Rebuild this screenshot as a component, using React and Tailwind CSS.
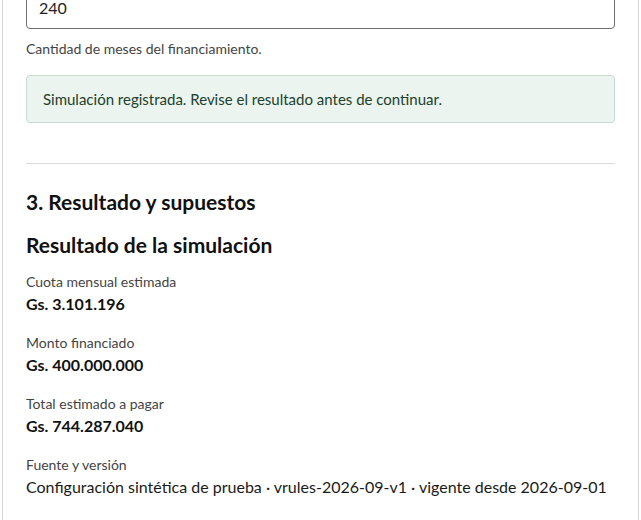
export default function App() {
  const results = [
    { label: 'Cuota mensual estimada', value: 'Gs. 3.101.196' },
    { label: 'Monto financiado', value: 'Gs. 400.000.000' },
    { label: 'Total estimado a pagar', value: 'Gs. 744.287.040' },
  ];

  return (
    <div className="h-[520px] overflow-hidden bg-white font-['Lato',sans-serif] text-[#1a1a1a]">
      <div className="mx-[2px] -mt-[42px] border-x border-t border-[#d6d6d6] px-[23px] pt-[26px] pb-8">
        <input
          type="text"
          readOnly
          value="240"
          className="block h-[44px] w-full rounded-[4px] border border-[#6f6f6f] px-3 text-[16px] leading-[22px] text-[#222] outline-none"
        />
        <p className="mt-[10px] text-[14px] leading-[20px] text-[#444]">Cantidad de meses del financiamiento.</p>

        <div className="mt-[16px] flex h-[48px] items-center rounded-[4px] border border-[#c8dccf] bg-[#ebf4ee] px-4 text-[15px] text-[#21402d]">
          Simulación registrada. Revise el resultado antes de continuar.
        </div>

        <hr className="mt-[40px] border-t border-[#d9d9d9]" />

        <h2 className="mt-[24px] text-[21px] leading-[28px] font-bold text-[#111]">3. Resultado y supuestos</h2>
        <h3 className="mt-[15px] text-[21px] leading-[28px] font-bold text-[#111]">Resultado de la simulación</h3>

        <dl className="mt-[13px] flex flex-col gap-[18px]">
          {results.map((r) => (
            <div key={r.label}>
              <dt className="text-[14px] leading-[20px] text-[#444]">{r.label}</dt>
              <dd className="mt-[1px] text-[16px] leading-[22px] font-bold text-[#111]">{r.value}</dd>
            </div>
          ))}
          <div>
            <dt className="text-[14px] leading-[20px] text-[#444]">Fuente y versión</dt>
            <dd className="mt-[1px] text-[16px] leading-[22px] text-[#1a1a1a]">
              Configuración sintética de prueba · vrules-2026-09-v1 · vigente desde 2026-09-01
            </dd>
          </div>
        </dl>
      </div>
    </div>
  );
}
